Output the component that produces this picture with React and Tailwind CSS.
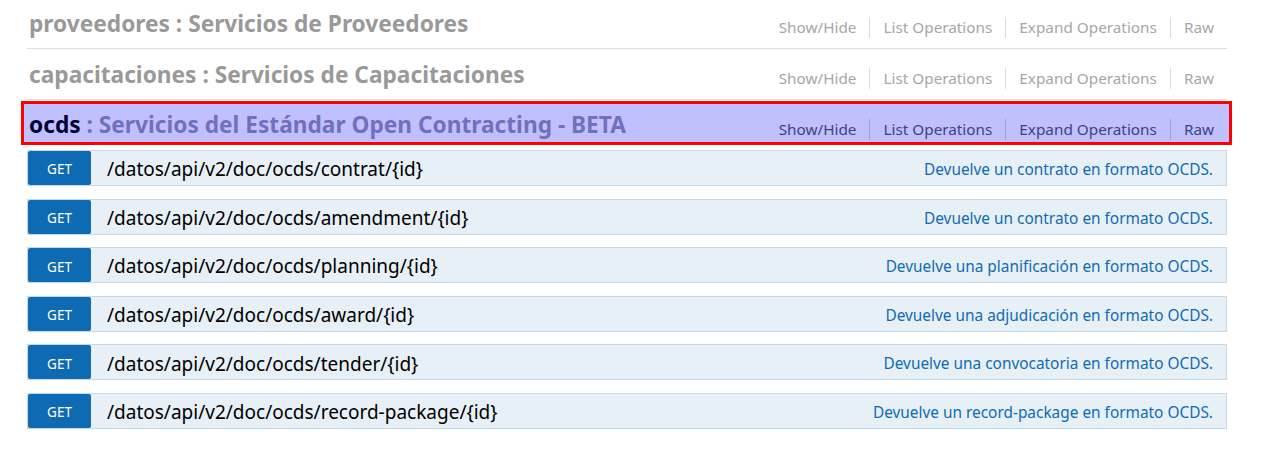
import React from "react";

const ops = [
  ["/datos/api/v2/doc/ocds/contrat/{id}", "Devuelve un contrato en formato OCDS."],
  ["/datos/api/v2/doc/ocds/amendment/{id}", "Devuelve un contrato en formato OCDS."],
  ["/datos/api/v2/doc/ocds/planning/{id}", "Devuelve una planificación en formato OCDS."],
  ["/datos/api/v2/doc/ocds/award/{id}", "Devuelve una adjudicación en formato OCDS."],
  ["/datos/api/v2/doc/ocds/tender/{id}", "Devuelve una convocatoria en formato OCDS."],
  ["/datos/api/v2/doc/ocds/record-package/{id}", "Devuelve un record-package en formato OCDS."],
];

const links = ["Show/Hide", "List Operations", "Expand Operations", "Raw"];

function Links({ active }) {
  return (
    <ul className={"flex items-center " + (active ? "pt-[10px]" : "pt-[6px]")}>
      {links.map((l, i) => (
        <li
          key={l}
          className={
            "px-[13px] text-[15.3px] leading-[21px] " +
            (i > 0 ? "border-l " : "") +
            (active ? "text-[#3f3f80] border-[#9d9de0]" : "text-[#a6a6a6] border-[#dddddd]")
          }
        >
          {l}
        </li>
      ))}
    </ul>
  );
}

function Heading({ name, desc, first }) {
  return (
    <div
      className={
        "flex items-center justify-between border-b border-[#dddddd] " +
        (first ? "h-[49px] pt-[0px]" : "h-[51px] pt-[2px]")
      }
    >
      <h2 className="pl-[2px] text-[22.7px] leading-[30px] font-bold text-[#999999]">
        {name} : {desc}
      </h2>
      <Links />
    </div>
  );
}

export default function App() {
  return (
    <div
      className="w-[1271px] h-[453px] bg-white overflow-hidden"
      style={{ fontFamily: '"Noto Sans", "Open Sans", sans-serif' }}
    >
      <div className="ml-[27px] w-[1200px]">
        <Heading first name="proveedores" desc="Servicios de Proveedores" />
        <Heading name="capacitaciones" desc="Servicios de Capacitaciones" />
        <div className="mt-[1px] mb-[5px] -ml-[6px] -mr-[5px] h-[44px] border-[3px] border-[#ff0000] bg-[#c0c0ff] pl-[3px] pr-[2px] pt-[3px] flex items-center justify-between">
          <h2 className="pl-[2px] text-[22.7px] leading-[30px] font-bold">
            <span className="text-[#000033]">ocds</span>
            <span className="text-[#7070bd]"> : Servicios del Estándar Open Contracting - BETA</span>
          </h2>
          <Links active />
        </div>
        <div className="flex flex-col gap-[12.6px]">
          {ops.map(([path, desc]) => (
            <div
              key={path}
              className="h-[36px] flex items-center border border-[#c3d9ec] bg-[#e7f0f7]"
            >
              <span className="w-[63px] h-[34px] rounded-[2px] bg-[#0f6ab4] text-white text-[13.5px] flex items-center justify-center pt-[3px]">
                GET
              </span>
              <span className="ml-[16px] mt-[3px] text-[19px] text-black">{path}</span>
              <span className="ml-auto mr-[13px] mt-[3px] text-[15.4px] text-[#0f6ab4]">{desc}</span>
            </div>
          ))}
        </div>
      </div>
    </div>
  );
}
